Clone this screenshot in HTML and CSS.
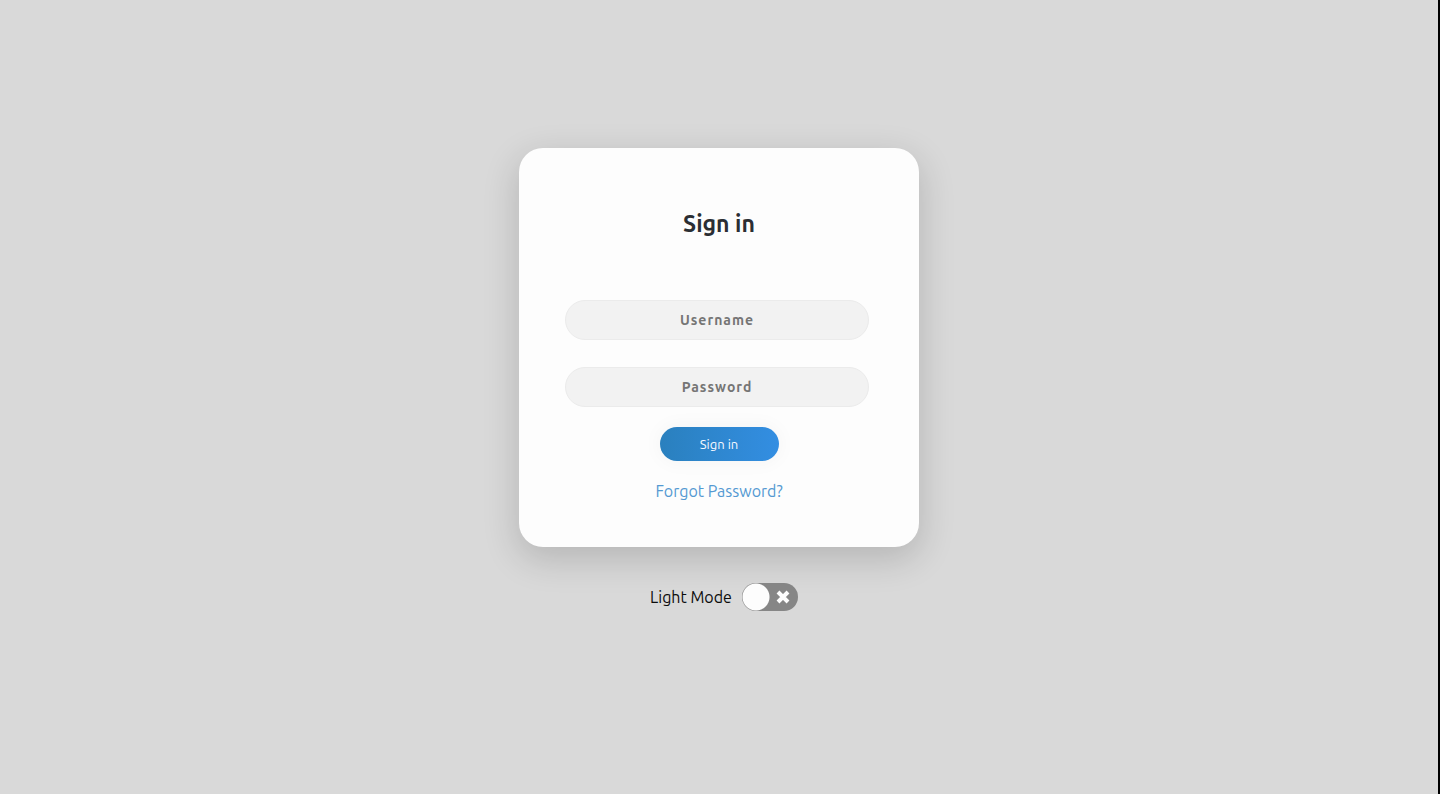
FILE: index.html
```html
<!DOCTYPE html>
<html lang="en">
<head>
<meta charset="utf-8">
<meta name="viewport" content="width=device-width, initial-scale=1">
<title>Sign in</title>
<link rel="stylesheet" href="styles.css">
</head>
<body>
<main class="page">
  <form class="card">
    <h1 class="title">Sign in</h1>
    <input class="field" type="text" placeholder="Username" aria-label="Username">
    <input class="field" type="password" placeholder="Password" aria-label="Password">
    <button class="submit" type="button">Sign in</button>
    <a class="forgot" href="#">Forgot Password?</a>
  </form>
  <label class="mode">
    <span>Light Mode</span>
    <span class="switch">
      <input class="switch-input" type="checkbox" role="switch">
      <svg class="switch-cross" viewBox="0 0 16 16" aria-hidden="true"><path d="M3 3l10 10M13 3L3 13"/></svg>
    </span>
  </label>
</main>
</body>
</html>
```
FILE: styles.css
```css
* {
  box-sizing: border-box;
}

body {
  margin: 0;
  font-family: Ubuntu, "Noto Sans", sans-serif;
  color: #0c0c0c;
  background: #d9d9d9;
}

.page {
  display: flex;
  flex-direction: column;
  align-items: center;
  min-height: 100vh;
  padding-top: 148px;
  border-right: 2px solid #000;
}

.card {
  display: flex;
  flex-direction: column;
  align-items: center;
  width: 400px;
  max-width: 100%;
  padding: 59px 46px 45px;
  border-radius: 24px;
  background: #fdfdfd;
  box-shadow: 0 11px 35px 2px rgba(0, 0, 0, 0.16);
}

.title {
  margin: 0 0 59px;
  font-size: 23px;
  line-height: 34px;
  font-weight: 700;
  color: #2b2e33;
}

.field {
  width: 304px;
  max-width: 100%;
  height: 40px;
  margin: 0 4px 27px 0;
  padding: 0 20px;
  border: 1px solid #ebebeb;
  border-radius: 20px;
  outline: none;
  background: #f2f2f2;
  font: 700 14px/20px Ubuntu, "Noto Sans", sans-serif;
  letter-spacing: 1px;
  text-align: center;
  color: #757575;
}

.field::placeholder {
  color: #757575;
  opacity: 1;
}

.submit {
  width: 119px;
  height: 34px;
  margin: -7px 0 19px;
  border: 0;
  border-radius: 17px;
  background: linear-gradient(to right, #2a80be, #338ee2);
  box-shadow: 0 0 20px 1px rgba(0, 0, 0, 0.04);
  font: 13px/18px Ubuntu, "Noto Sans", sans-serif;
  color: #f5f9ff;
}

.forgot {
  font-size: 16px;
  line-height: 22px;
  text-decoration: none;
  color: #5499d2;
}

.mode {
  display: flex;
  align-items: center;
  gap: 10px;
  margin: 36px 0 0 10px;
  font-size: 16px;
  line-height: 22px;
}

.switch {
  position: relative;
  display: flex;
}

.switch-input {
  appearance: none;
  width: 56px;
  height: 28px;
  margin: 0;
  border-radius: 14px;
  background: radial-gradient(circle at 14px 14px, #fdfdfd 13px, transparent 14px) #868686;
}

.switch-cross {
  position: absolute;
  top: 6px;
  right: 7px;
  width: 16px;
  height: 16px;
  fill: none;
  stroke: #fdfdfd;
  stroke-width: 4;
  stroke-linecap: butt;
}
```
